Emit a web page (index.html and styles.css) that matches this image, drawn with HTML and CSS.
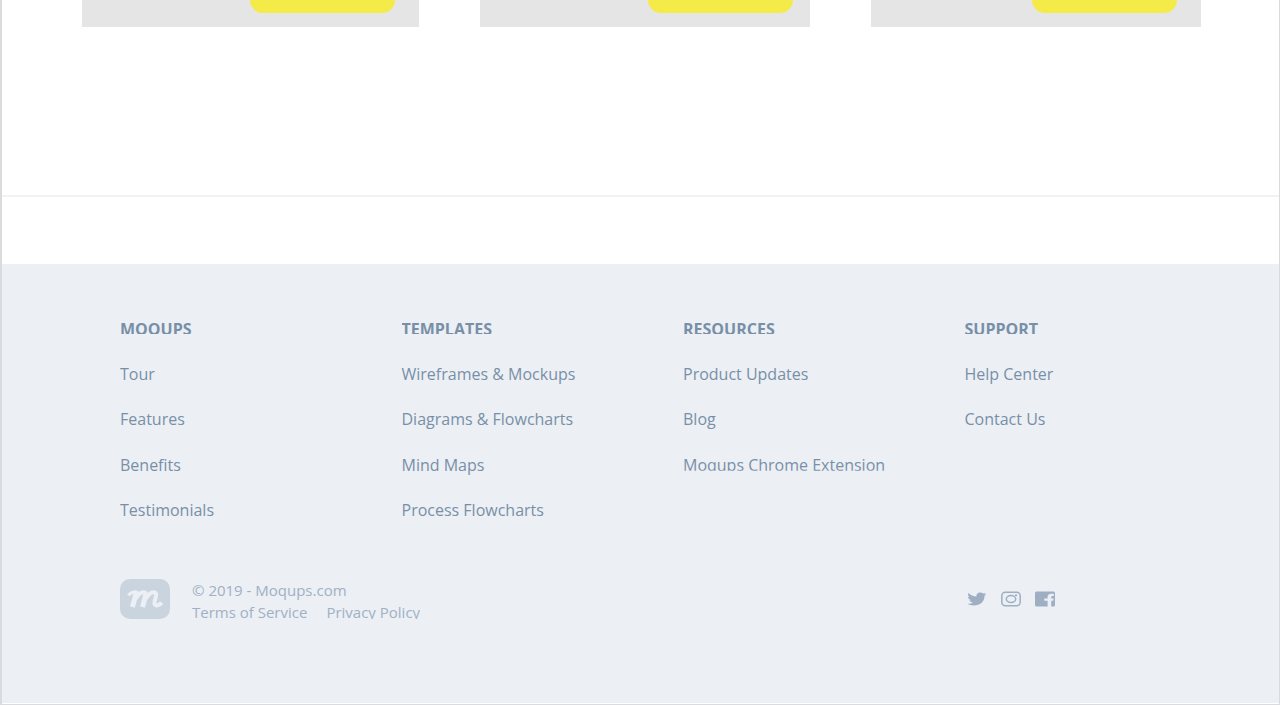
FILE: index.html
```html
<!DOCTYPE html>
<html lang="en">
<head>
<meta charset="utf-8">
<title>Moqups</title>
<link rel="stylesheet" href="styles.css">
</head>
<body>
<div class="page">
  <main class="cards">
    <article class="card"><button class="card-button" type="button" aria-label="Open first card"></button></article>
    <article class="card"><button class="card-button" type="button" aria-label="Open second card"></button></article>
    <article class="card"><button class="card-button" type="button" aria-label="Open third card"></button></article>
  </main>
  <hr class="divider">
  <footer class="footer">
    <nav class="columns" aria-label="Footer">
      <section>
        <h2 class="heading">MOQUPS</h2>
        <ul class="links">
          <li><a href="#">Tour</a></li>
          <li><a href="#">Features</a></li>
          <li><a href="#">Benefits</a></li>
          <li><a href="#">Testimonials</a></li>
        </ul>
      </section>
      <section>
        <h2 class="heading">TEMPLATES</h2>
        <ul class="links">
          <li><a href="#">Wireframes &amp; Mockups</a></li>
          <li><a href="#">Diagrams &amp; Flowcharts</a></li>
          <li><a href="#">Mind Maps</a></li>
          <li><a href="#">Process Flowcharts</a></li>
        </ul>
      </section>
      <section>
        <h2 class="heading">RESOURCES</h2>
        <ul class="links">
          <li><a href="#">Product Updates</a></li>
          <li><a href="#">Blog</a></li>
          <li><a class="cropped" href="#">Moqups Chrome Extension</a></li>
        </ul>
      </section>
      <section>
        <h2 class="heading">SUPPORT</h2>
        <ul class="links">
          <li><a href="#">Help Center</a></li>
          <li><a href="#">Contact Us</a></li>
        </ul>
      </section>
    </nav>
    <div class="columns legal-row">
      <div class="legal">
        <svg class="logo" viewBox="0 0 50 40" role="img" aria-label="Moqups logo">
          <rect width="50" height="40" rx="10" fill="#cad4de"/>
          <g fill="none" stroke="#eceff4" stroke-linejoin="round">
            <path d="M8.500 16.500Q10.500 12.600 17 13" stroke-width="3"/>
            <path d="M16.800 12L12.400 28M26 15L22.600 28" stroke-width="5"/>
            <path d="M15.500 20Q19.500 13 23.500 13.200Q27 13.500 26 17" stroke-width="4"/>
            <path d="M25.500 20Q30 13 33.500 13.200Q37 13.500 36 17L34.600 22.500Q33.800 26.600 37 26.400Q40 26.200 41.500 23.500" stroke-width="4"/>
          </g>
        </svg>
        <div>
          <p class="legal-line">© 2019 - Moqups.com</p>
          <p class="legal-line legal-links"><a href="#">Terms of Service</a><a href="#">Privacy Policy</a></p>
        </div>
      </div>
      <div class="social">
        <a href="#" aria-label="Twitter"><svg class="icon" viewBox="0 0 20 16"><path fill="#9eafc3" d="M19.500 3.200l-2 1.900C17.500 11 13 14.500 7 14.500 4.300 14.500 2 14 .5 12.800c2.100.2 4.100-.2 5.400-1.300-1.700-.1-3-1-3.500-2.300h1.500C2.100 8.500 1 7.400 1 5.800l1.600.4C1 5 .7 3.400 1.500 2c2 2.200 4.800 3.300 8 3.500C9 3.300 10.800 1.500 13.200 1.500c1.200 0 2.200.4 2.900 1L18.600 1.800l-1.500 1.700z"/></svg></a>
        <a href="#" aria-label="Instagram"><svg class="icon" viewBox="0 0 20 16"><g fill="none" stroke="#9eafc3" stroke-width="1.500"><rect x=".8" y="1.200" width="18.400" height="13.600" rx="3.500"/><ellipse cx="10" cy="8" rx="4.700" ry="3.500"/></g><ellipse cx="15" cy="4.200" rx="1.200" ry="1" fill="#9eafc3"/></svg></a>
        <a href="#" aria-label="Facebook"><svg class="icon" viewBox="0 0 20 16"><path fill="#9eafc3" d="M1.500.5h17Q20 .5 20 2v12q0 1.500-1.500 1.500h-2.300V9.800h2l.5-2.400h-2.500V6q0-1.100 1.200-1.100h1.400V2.700h-2.200Q12.600 2.700 12.600 5.700v1.700H9.300v2.400h3.300v5.700H1.500Q0 15.500 0 14V2Q0 .5 1.500.5z"/></svg></a>
      </div>
    </div>
  </footer>
</div>
</body>
</html>
```
FILE: styles.css
```css
* { box-sizing: border-box; }
body {
  margin: 0;
  background: #fff;
  color: #788fa8;
  font: 16px/22px "Open Sans", sans-serif;
}
.page {
  border: solid #dadbdd;
  border-width: 0 1px 1px 2px;
  padding-bottom: 1px;
}
.cards {
  display: grid;
  grid-template-columns: 337fr 330fr 330fr;
  column-gap: 61px;
  padding: 0 78px 0 80px;
}
.card {
  display: flex;
  justify-content: flex-end;
  padding: 0 24px 14px 0;
  background: #e5e5e5;
}
.card:nth-child(2) { padding-right: 17px; }
.card-button {
  width: 145px;
  height: 13px;
  padding: 0;
  border: 0;
  border-radius: 0 0 13px 13px;
  background: #f4eb49;
}
.divider {
  height: 2px;
  margin: 168px 0 67px;
  border: 0;
  background: #f2f2f3;
}
.footer {
  padding: 54px 33px 84px 118px;
  background: #eceff4;
}
.columns {
  display: grid;
  grid-template-columns: repeat(4, 1fr);
}
.heading {
  height: 16px;
  margin: 0;
  overflow: hidden;
  font-size: 16px;
  line-height: 22px;
}
.links {
  display: grid;
  grid-template-rows: repeat(4, 1fr);
  align-items: center;
  height: 182px;
  margin: 17px 0 0;
  padding: 0;
  list-style: none;
}
a {
  color: inherit;
  text-decoration: none;
}
.links a { display: block; }
.links .cropped { clip-path: inset(0 0 5px); }
.legal-row {
  align-items: center;
  margin-top: 46px;
  color: #a0b1c5;
}
.legal {
  display: flex;
  grid-column: span 3;
  gap: 22px;
}
.logo {
  width: 50px;
  height: 40px;
}
.legal-line {
  margin: 0;
  font-size: 15px;
  line-height: 22px;
}
.legal-links {
  display: flex;
  gap: 19px;
  height: 18px;
  overflow: hidden;
}
.social {
  display: flex;
  gap: 14px;
  padding-left: 2px;
}
.icon {
  display: block;
  width: 20px;
  height: 16px;
}
```
